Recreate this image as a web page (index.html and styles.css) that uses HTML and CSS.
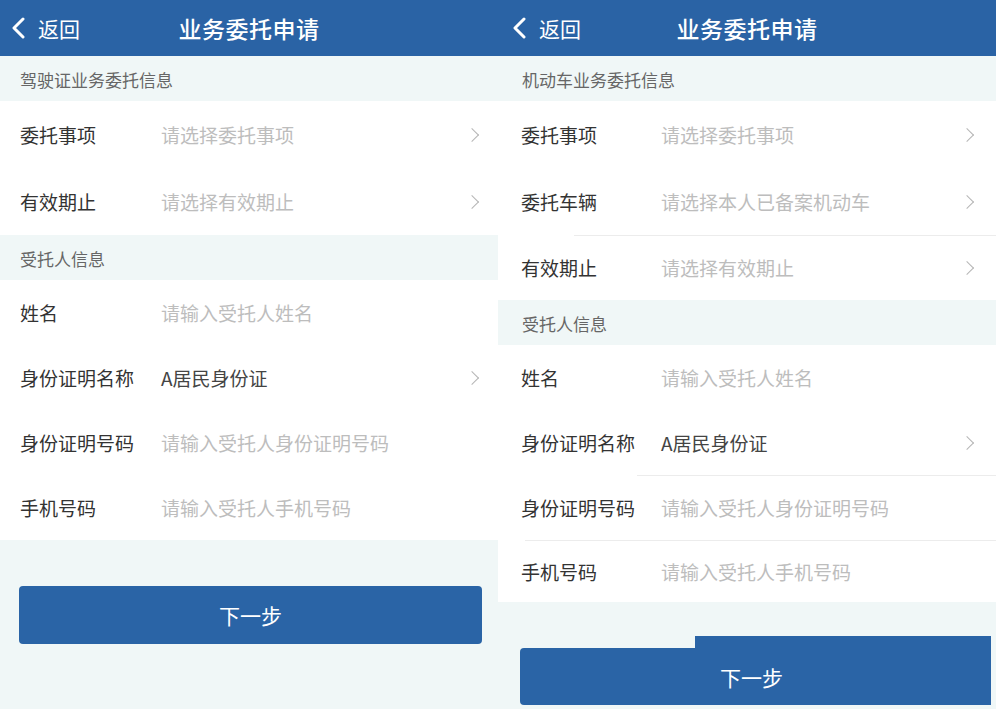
FILE: index.html
```html
<!DOCTYPE html>
<html lang="zh-CN">
<head>
    <meta charset="UTF-8">
    <meta name="viewport" content="width=device-width, initial-scale=1.0">
    <title>业务委托申请</title>
    <link rel="stylesheet" href="styles.css">
</head>
<body>
    <div class="screens">
        <!-- 驾驶证 -->
        <div class="screen left">
            <div class="header">
                <div class="back">
                    <svg class="back-icon" viewBox="0 0 14 22" width="14" height="22"><path d="M12 2 L3 11 L12 20" fill="none" stroke="#fff" stroke-width="3" stroke-linecap="round" stroke-linejoin="round"/></svg>
                    <span>返回</span>
                </div>
                <div class="title">业务委托申请</div>
                <div></div>
            </div>
            <div class="section">驾驶证业务委托信息</div>
            <div class="group">
                <div class="row tall">
                    <div class="label">委托事项</div>
                    <div class="value placeholder">请选择委托事项</div>
                    <span class="arrow"></span>
                </div>
                <div class="row tall">
                    <div class="label">有效期止</div>
                    <div class="value placeholder">请选择有效期止</div>
                    <span class="arrow"></span>
                </div>
            </div>
            <div class="section">受托人信息</div>
            <div class="group">
                <div class="row">
                    <div class="label">姓名</div>
                    <div class="value placeholder">请输入受托人姓名</div>
                </div>
                <div class="row">
                    <div class="label">身份证明名称</div>
                    <div class="value">A居民身份证</div>
                    <span class="arrow"></span>
                </div>
                <div class="row">
                    <div class="label">身份证明号码</div>
                    <div class="value placeholder">请输入受托人身份证明号码</div>
                </div>
                <div class="row">
                    <div class="label">手机号码</div>
                    <div class="value placeholder">请输入受托人手机号码</div>
                </div>
            </div>
            <div class="actions">
                <button class="next">下一步</button>
            </div>
        </div>

        <!-- 机动车 -->
        <div class="screen right">
            <div class="header">
                <div class="back">
                    <svg class="back-icon" viewBox="0 0 14 22" width="14" height="22"><path d="M12 2 L3 11 L12 20" fill="none" stroke="#fff" stroke-width="3" stroke-linecap="round" stroke-linejoin="round"/></svg>
                    <span>返回</span>
                </div>
                <div class="title">业务委托申请</div>
                <div></div>
            </div>
            <div class="section">机动车业务委托信息</div>
            <div class="group">
                <div class="row tall">
                    <div class="label">委托事项</div>
                    <div class="value placeholder">请选择委托事项</div>
                    <span class="arrow"></span>
                </div>
                <div class="row tall">
                    <div class="label">委托车辆</div>
                    <div class="value placeholder">请选择本人已备案机动车</div>
                    <span class="arrow"></span>
                </div>
                <div class="row line-a">
                    <div class="label">有效期止</div>
                    <div class="value placeholder">请选择有效期止</div>
                    <span class="arrow"></span>
                </div>
            </div>
            <div class="section">受托人信息</div>
            <div class="group">
                <div class="row">
                    <div class="label">姓名</div>
                    <div class="value placeholder">请输入受托人姓名</div>
                </div>
                <div class="row">
                    <div class="label">身份证明名称</div>
                    <div class="value">A居民身份证</div>
                    <span class="arrow"></span>
                </div>
                <div class="row line-b">
                    <div class="label">身份证明号码</div>
                    <div class="value placeholder">请输入受托人身份证明号码</div>
                </div>
                <div class="row line-c short">
                    <div class="label">手机号码</div>
                    <div class="value placeholder">请输入受托人手机号码</div>
                </div>
            </div>
            <div class="actions">
                <button class="next">下一步</button>
            </div>
        </div>
    </div>
</body>
</html>
```

FILE: styles.css
```css
body {
    margin: 0;
    overflow: hidden;
    font-family: "Noto Sans CJK SC", "Noto Sans", sans-serif;
    background: #f0f7f7;
}

.screens {
    display: flex;
    width: 996px;
    height: 709px;
}

.screen {
    width: 498px;
    height: 709px;
    background: #f0f7f7;
    overflow: hidden;
}

.header {
    height: 56px;
    background: #2a63a5;
    display: grid;
    grid-template-columns: 1fr auto 1fr;
    align-items: center;
    color: #fff;
}

.back {
    display: flex;
    align-items: center;
    padding-left: 11px;
    font-size: 21px;
}

.back-icon {
    margin-right: 13px;
}

.right .back {
    padding-left: 14px;
}

.title {
    font-size: 23px;
    font-weight: 500;
    letter-spacing: 0.5px;
}

.section {
    height: 45px;
    line-height: 48px;
    padding-left: 20px;
    font-size: 17px;
    color: #666;
    background: #f0f7f7;
}

.right .section {
    padding-left: 24px;
}

.group {
    background: #fff;
}

.row {
    position: relative;
    height: 65px;
    display: flex;
    align-items: center;
    padding: 0 17px 0 20px;
    font-size: 19px;
}

.row.tall {
    height: 67px;
}

.row.short {
    height: 62px;
}

.right .row {
    padding: 0 20px 0 23px;
}

.label {
    width: 141px;
    color: #333;
    flex-shrink: 0;
}

.right .label {
    width: 140px;
}

.value {
    flex: 1;
    color: #444;
}

.value.placeholder {
    color: #bdbdbd;
}

.arrow {
    width: 9px;
    height: 9px;
    border-top: 1.6px solid #b5b5b5;
    border-right: 1.6px solid #b5b5b5;
    transform: rotate(45deg);
    margin-right: 4px;
}

/* hairlines between rows on the second screen */
.line-a::before,
.line-b::before,
.line-c::before {
    content: "";
    position: absolute;
    top: 0;
    right: 0;
    height: 1px;
    background: #ececec;
}

.line-a::before {
    left: 76px;
}

.line-b::before {
    left: 139px;
}

.line-c::before {
    left: 27px;
}

.actions {
    padding: 46px 16px 0 19px;
}

.right .actions {
    padding: 46px 5px 0 22px;
}

.next {
    position: relative;
    display: block;
    width: 100%;
    height: 58px;
    border: none;
    border-radius: 4px;
    background: #2a64a6;
    color: #fff;
    font-family: inherit;
    font-size: 21px;
}

.right .next {
    height: 57px;
    padding-right: 14px;
    border-radius: 4px 0 0 4px;
}

.right .next::before {
    content: "";
    position: absolute;
    top: -12px;
    left: 175px;
    right: 0;
    height: 12px;
    background: #2a64a6;
}
```
